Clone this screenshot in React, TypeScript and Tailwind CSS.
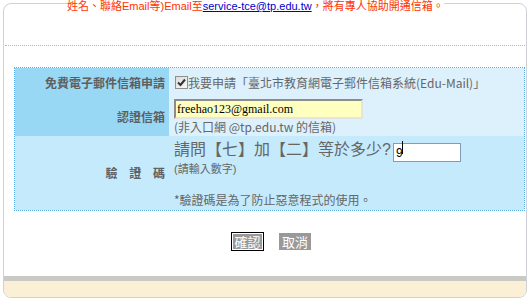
const font = "font-['Noto_Sans_CJK_TC','Noto_Sans',sans-serif]";
const tight = "font-['Liberation_Sans','Noto_Sans_CJK_TC',sans-serif]";

function CheckMark() {
  return (
    <span className="inline-flex h-[13px] w-[13px] shrink-0 items-center justify-center border border-[#8f8f8f] bg-gradient-to-br from-[#dcdcdc] to-[#f8f8f8]">
      <svg width="9" height="9" viewBox="0 0 9 9">
        <path d="M1 4.5 L3.5 7 L8 1.5" fill="none" stroke="#333" strokeWidth="2" />
      </svg>
    </span>
  );
}

export default function App() {
  return (
    <div className={`h-[300px] w-[530px] overflow-hidden bg-white ${font}`}>
      <div className="ml-[3px] mt-[3px] flex h-[295px] w-[524px] flex-col rounded-[8px] border border-[#d0d0d8]">
        <p className={`-mt-[5px] pl-[63px] ${tight} text-[11px] leading-[14px] text-[#ff3300]`}>
          <span className="bg-white">
            姓名、聯絡Email等)Email至
            <a className="text-[#0000cc] underline">service-tce@tp.edu.tw</a>
            ，將有專人協助開通信箱。
          </span>
        </p>
        <div className="mx-px h-[33px] border-b border-dotted border-[#b8b8b8]" />

        <div className="ml-[10px] mt-[21px] w-[511px] border border-dotted border-[#5aaee6]">
          <div className="flex h-[29px]">
            <div className="flex w-[154px] items-center justify-end bg-[#98d8f4] pr-[4px] text-[12px] font-bold text-[#5f5f5f]">
              免費電子郵件信箱申請
            </div>
            <div className="flex flex-1 items-center bg-[#ddf1fd] pl-[6px] text-[12px] text-[#666]">
              <CheckMark />
              <span>我要申請「臺北市教育網電子郵件信箱系統(Edu-Mail)」</span>
            </div>
          </div>
          <div className="flex h-[39px]">
            <div className="flex w-[154px] items-center justify-end bg-[#98d8f4] pr-[4px] text-[12px] font-bold text-[#5f5f5f]">
              認證信箱
            </div>
            <div className="flex flex-1 flex-col bg-[#ddf1fd] pl-[5px] pt-[2px] text-[12px] text-[#666]">
              <input
                readOnly
                value="freehao123@gmail.com"
                className="h-[20px] w-[189px] border-2 border-t-[#8c8c8c] border-l-[#8c8c8c] border-r-[#e4e4e4] border-b-[#e4e4e4] bg-[#ffffc0] px-px font-['Liberation_Serif',serif] text-[12px] text-black outline-none"
              />
              <span className="leading-[15px]">(非入口網 @tp.edu.tw 的信箱)</span>
            </div>
          </div>
          <div className="flex h-[74px] bg-[#c4eafb]">
            <div className="flex w-[154px] items-center justify-end pr-[4px] text-[12px] font-bold text-[#5f5f5f] [word-spacing:9px]">
              驗 證 碼
            </div>
            <div className="flex flex-1 flex-col pl-[5px] pt-[4px] text-[#666]">
              <div className="flex h-[20px] items-center gap-[2px]">
                <span className={`${tight} text-[16px] leading-[16px]`}>請問【七】加【二】等於多少?</span>
                <div className="relative">
                  <input
                    readOnly
                    value="9"
                    className="h-[19px] w-[68px] border border-[#7f9db9] bg-white px-[2px] font-['Liberation_Sans',sans-serif] text-[12px] text-black outline-none"
                  />
                  <span className="absolute left-[9px] top-[3px] h-[13px] w-px bg-black" />
                </div>
              </div>
              <span className={`mt-[3px] ${tight} text-[11px] leading-[12px]`}>(請輸入數字)</span>
              <span className="mt-[18px] text-[12px] leading-[14px]">*驗證碼是為了防止惡意程式的使用。</span>
            </div>
          </div>
        </div>

        <div className="mt-[21px] flex h-[19px] items-center justify-center gap-[15px] pl-[12px]">
          <button className="flex h-[19px] w-[33px] items-center justify-center border border-black bg-[#999] text-[13px] leading-none text-white shadow-[inset_0_0_0_1px_#fff]">
            確認
          </button>
          <button className="flex h-[17px] w-[32px] items-center justify-center bg-[#999] text-[13px] leading-none text-white">
            取消
          </button>
        </div>

        <div className="mt-[25px] h-[5px] bg-[#c9cac6]" />
        <div className="flex-1 rounded-b-[7px] bg-[#fbf0d6]" />
      </div>
    </div>
  );
}
